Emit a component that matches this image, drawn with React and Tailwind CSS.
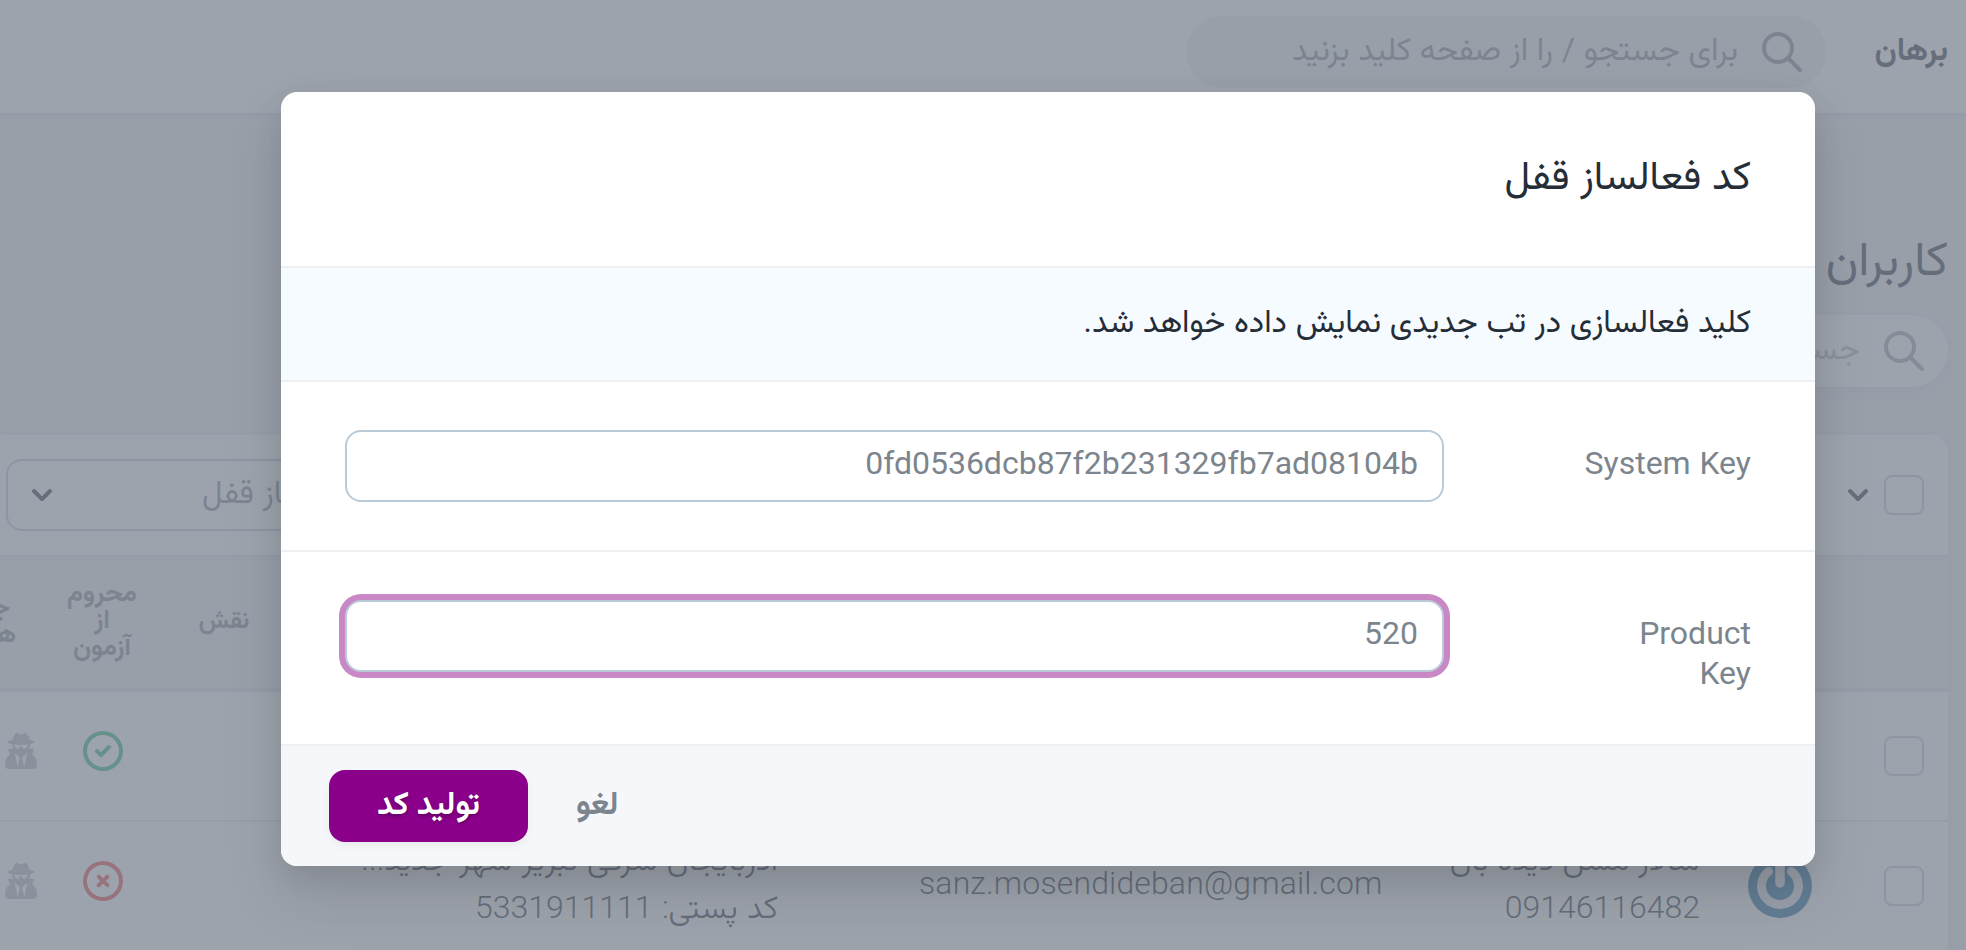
import { FaUserSecret } from "react-icons/fa";

const FONT = "font-['Roboto','Vazirmatn','Noto_Sans_Arabic','DejaVu_Sans',sans-serif]";

function SearchIcon({ faint }) {
  return (
    <svg viewBox="0 0 20 20" className={faint ? "size-10 shrink-0 fill-[#9aa2aa]" : "size-10 shrink-0 fill-[#7c858e]"}>
      <path fillRule="nonzero" d="M14.32 12.906l5.387 5.387a1 1 0 0 1-1.414 1.414l-5.387-5.387a8 8 0 1 1 1.414-1.414zM8 14A6 6 0 1 0 8 2a6 6 0 0 0 0 12z" />
    </svg>
  );
}

function Chevron() {
  return (
    <svg viewBox="0 0 10 6" className="h-3 w-5 shrink-0 fill-[#252d37]">
      <path d="M8.292893.292893c.390525-.390524 1.023689-.390524 1.414214 0 .390524.390525.390524 1.023689 0 1.414214l-4 4c-.390525.390524-1.023689.390524-1.414214 0l-4-4c-.390524-.390525-.390524-1.023689 0-1.414214.390525-.390524 1.023689-.390524 1.414214 0L5 3.585786 8.292893.292893z" />
    </svg>
  );
}

function Checkbox() {
  return <span className="block size-10 shrink-0 rounded-lg border-2 border-[#bacad6] bg-white" />;
}

function StatusIcon({ ok }) {
  return (
    <svg viewBox="0 0 20 20" className={ok ? "size-10 fill-[#21b978]" : "size-10 fill-[#e74444]"}>
      {ok ? (
        <path d="M10 20a10 10 0 1 1 0-20 10 10 0 0 1 0 20zm0-2a8 8 0 1 0 0-16 8 8 0 0 0 0 16zm-2.3-8.7l1.3 1.29 3.3-3.3a1 1 0 0 1 1.4 1.42l-4 4a1 1 0 0 1-1.4 0l-2-2a1 1 0 0 1 1.4-1.42z" />
      ) : (
        <path d="M10 20a10 10 0 1 1 0-20 10 10 0 0 1 0 20zm0-2a8 8 0 1 0 0-16 8 8 0 0 0 0 16zm1.4-8l1.5 1.3a1 1 0 0 1-1.4 1.5L10 11.4l-1.4 1.4a1 1 0 0 1-1.5-1.4L8.6 10 7.2 8.6a1 1 0 0 1 1.4-1.5L10 8.6l1.4-1.4a1 1 0 0 1 1.5 1.4L11.4 10z" />
      )}
    </svg>
  );
}

function Avatar() {
  return (
    <svg viewBox="0 0 64 64" className="size-16">
      <circle cx="32" cy="32" r="32" fill="#14699f" />
      <path d="M20.5 17.5A18.5 18.5 0 1 0 43.5 17.5" fill="none" stroke="#eaebf2" strokeWidth="9" strokeLinecap="round" />
      <path d="M32 8V29" fill="none" stroke="#eaebf2" strokeWidth="9.5" strokeLinecap="round" />
    </svg>
  );
}

function Row({ ok, children }) {
  return (
    <div className="flex h-[130px] items-center border-b-2 border-[#e3e7eb] bg-white pr-6">
      <Checkbox />
      {children}
      <div className="mr-auto flex h-full shrink-0 items-start gap-[46px] pt-[39px]">
        <StatusIcon ok={ok} />
        <FaUserSecret className="mt-0.5 ml-[5px] h-9 w-8 text-[#b3b9bf]" />
      </div>
    </div>
  );
}

function Field({ label, value, focused }) {
  return (
    <div className={focused ? "flex h-[194px] border-b-2 border-[#eef1f4]" : "flex h-[170px] border-b-2 border-[#eef1f4]"}>
      <div className="w-[307px] shrink-0 pt-[61px] pr-16 pl-16 text-right leading-10 text-[#7c858e]" dir="ltr">
        <div className={focused ? "ml-auto w-[115px]" : "whitespace-nowrap"}>{label}</div>
      </div>
      <div className="pt-12 pr-16">
        <div
          dir="ltr"
          className={
            focused
              ? "flex h-[72px] w-[1099px] items-center justify-end rounded-2xl border-2 border-[#bacad6] bg-white px-6 pb-1.5 text-[#7c858e] shadow-[0_0_0_6px_#c788c5]"
              : "flex h-[72px] w-[1099px] items-center justify-end rounded-2xl border-2 border-[#bacad6] bg-white px-6 pb-1.5 text-[#7c858e]"
          }
        >
          {value}
        </div>
      </div>
    </div>
  );
}

function Page() {
  return (
    <div className="flex h-[950px] flex-col bg-[#eaedf3]">
      <header className="flex h-[113px] shrink-0 items-start bg-white pr-[18px] shadow-[0_2px_4px_0_rgba(0,0,0,0.05)]">
        <div className="w-[122px] pt-[25px] text-[32px] leading-[48px] font-bold text-[#252d3d]">برهان</div>
        <div className="mt-4 flex h-[72px] w-[640px] items-center rounded-full bg-[#eaedf3] pr-6">
          <SearchIcon />
          <span className="mr-6 pb-1.5 text-[#7c858e]">برای جستجو / را از صفحه کلید بزنید</span>
        </div>
      </header>

      <div className="pt-[113px] pr-[18px]">
        <h1 className="h-[89px] pt-[3px] text-[48px] leading-[60px] font-normal text-[#252d3d]">کاربران</h1>
        <div className="flex h-[72px] w-[500px] items-center rounded-full bg-white pr-6 shadow-[0_4px_8px_0_rgba(0,0,0,0.05)]">
          <SearchIcon faint />
          <span className="mr-6 pb-1.5 text-[#b3b9bf]">جستجو</span>
        </div>

        <section className="mt-12 overflow-hidden rounded-tr-2xl bg-white shadow-[0_4px_8px_0_rgba(0,0,0,0.05)]">
          <div className="flex h-[120px] items-center pr-6">
            <Checkbox />
            <div className="mr-4"><Chevron /></div>
            <div className="mr-auto ml-1.5 flex h-[72px] w-[560px] items-center justify-between rounded-2xl border-2 border-[#bacad6] pr-6 pl-6">
              <span className="mr-[88px] w-[250px] pb-1.5 text-left text-[#7c858e]">کد فعالساز قفل</span>
              <Chevron />
            </div>
          </div>
          <div className="flex h-[137px] items-center justify-end border-t-2 border-b-4 border-[#e0e3ea] bg-[#eaedf3] pb-1.5 text-center text-[26px] leading-[27px] font-bold text-[#7c858e]">
            <div className="w-[60px] text-[25px]">نقش</div>
            <div className="mr-[47px] w-[90px] shrink-0">محروم<br />از<br />آزمون</div>
            <div className="mr-[41px] flex w-[16px] shrink-0 flex-col items-start">
              <span className="mr-1.5 whitespace-nowrap">جلسه</span>
              <span className="whitespace-nowrap">ها</span>
            </div>
          </div>
          <Row ok />
          <Row>
            <div className="mr-[72px]"><Avatar /></div>
            <div className="mr-[48px] w-[262px] shrink-0 pb-[6px] leading-[48px] font-light whitespace-nowrap text-[#252d3d]">
              سالار مسن دیده بان<br />09146116482
            </div>
            <div className="mr-[54px] w-[465px] shrink-0 pb-[7px] text-left font-light tracking-[0.13px] text-[#252d3d]" dir="ltr">sanz.mosendideban@gmail.com</div>
            <div className="mr-[141px] w-[420px] shrink-0 pb-[6px] leading-[48px] font-light whitespace-nowrap text-[#252d3d] [word-spacing:1.6px]">
              آذربایجان شرقی تبریز شهر جدید...<br />کد پستی: <span dir="ltr">5331911111</span>
            </div>
          </Row>
        </section>
      </div>
    </div>
  );
}

function Modal() {
  return (
    <div className="mt-[92px] mr-[151px] h-[774px] w-[1534px] overflow-hidden rounded-2xl bg-white shadow-[0_30px_60px_0_rgba(0,0,0,0.11),0_10px_30px_0_rgba(0,0,0,0.08)]">
      <div className="h-[176px] border-b-2 border-[#eef1f4] pt-14 pr-16 text-[40px] leading-[56px] text-[#252d37]">کد فعالساز قفل</div>
      <div className="h-[114px] border-b-2 border-[#eef1f4] bg-[#f6fbff] pt-[29px] pr-16 leading-[48px] text-[#252d37]">
        کلید فعالسازی در تب جدیدی نمایش داده خواهد شد.
      </div>
      <Field label="System Key" value="0fd0536dcb87f2b231329fb7ad08104b" />
      <Field label="Product Key" value="520" focused />
      <div className="flex h-[120px] items-center justify-end bg-[#f6f7fb] pl-12 font-bold">
        <button className="ml-12 pb-1.5 text-[#7c858e]">لغو</button>
        <button className="h-[72px] w-[199px] rounded-2xl bg-[#8b008b] pb-[7px] text-white shadow-[0_4px_8px_0_rgba(0,0,0,0.05)] [text-shadow:0_2px_4px_rgba(0,0,0,0.3)]">تولید کد</button>
      </div>
    </div>
  );
}

export default function App() {
  return (
    <div dir="rtl" className={`relative h-[950px] w-[1966px] overflow-hidden text-[32px] leading-[48px] [word-spacing:0.8px] ${FONT}`}>
      <Page />
      <div className="absolute inset-0 flex items-start justify-start bg-[#7c8490]/75">
        <Modal />
      </div>
    </div>
  );
}
